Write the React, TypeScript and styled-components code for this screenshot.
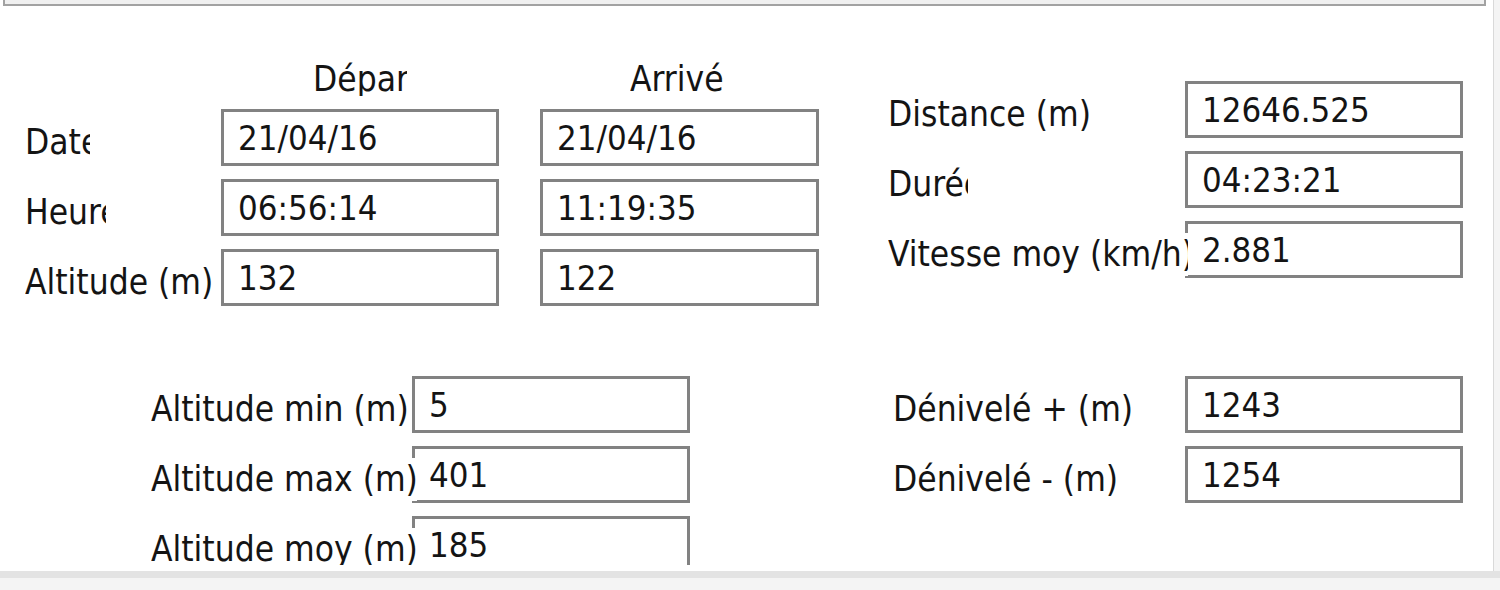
import React from 'react';
import styled, { createGlobalStyle } from 'styled-components';

const GlobalStyle = createGlobalStyle`
  html, body { margin: 0; padding: 0; background: #f4f4f4; }
  body { font-family: "DejaVu Sans Condensed", "DejaVu Sans", sans-serif; }
`;

const Window = styled.div`
  width: 1500px;
  height: 590px;
  overflow: hidden;
  background: #f4f4f4;
  display: flex;
  flex-direction: column;
`;

const Panel = styled.div`
  flex: none;
  width: 1494px;
  height: 571px;
  box-sizing: border-box;
  background: #ffffff;
  border-right: 1px solid #d9d9d9;
  display: flex;
  flex-direction: column;
`;

const BottomEdge = styled.div`
  flex: none;
  height: 7px;
  background: #e3e3e3;
`;

const TopStrip = styled.div`
  flex: none;
  margin-left: 3px;
  width: 1483px;
  height: 6px;
  box-sizing: border-box;
  background: #f0f0f0;
  border: 2px solid #a2a2a2;
  border-top: none;
`;

const Content = styled.div`
  flex: none;
  height: 559px;
  box-sizing: border-box;
  overflow: hidden;
  padding-top: 56px;
  font-size: 34.5px;
  color: #141414;
  display: flex;
  flex-direction: column;
  gap: 70px;
`;

const Section = styled.div<{ $pl: number }>`
  display: flex;
  align-items: flex-start;
  padding-left: ${p => p.$pl}px;
`;

const Block = styled.div<{ $mt?: number; $ml?: number }>`
  flex: none;
  display: flex;
  flex-direction: column;
  gap: 13px;
  margin-top: ${p => p.$mt ?? 0}px;
  margin-left: ${p => p.$ml ?? 0}px;
`;

const HeaderRow = styled.div`
  display: flex;
  height: 34px;
  align-items: flex-end;
`;

const Header = styled.div<{ $ml: number; $w: number }>`
  flex: none;
  margin-left: ${p => p.$ml}px;
  width: ${p => p.$w}px;
  height: 34px;
  line-height: 34px;
  font-size: 35px;
  white-space: nowrap;
  overflow: hidden;
`;

const Row = styled.div`
  display: flex;
  align-items: flex-start;
  height: 57px;
`;

const Label = styled.div<{ $track: number; $visible?: number }>`
  flex: none;
  position: relative;
  z-index: 1;
  width: ${p => p.$visible ?? p.$track}px;
  margin-right: ${p => p.$track - (p.$visible ?? p.$track)}px;
  margin-top: 12px;
  height: 43px;
  line-height: 43px;
  font-size: 35px;
  background: #ffffff;
  white-space: nowrap;
  overflow: hidden;
`;

const TextBox = styled.div<{ $w?: number; $ml?: number }>`
  flex: none;
  width: ${p => p.$w ?? 278}px;
  height: 57px;
  margin-left: ${p => p.$ml ?? 0}px;
  box-sizing: border-box;
  border: 3px solid #828282;
  background: #ffffff;
  padding: 9px 0 0 14px;
  line-height: 1;
  white-space: nowrap;
  overflow: hidden;
`;

export default function App() {
  return (
    <>
      <GlobalStyle />
      <Window>
        <Panel>
          <TopStrip />
          <Content>
            <Section $pl={25}>
              <Block>
                <HeaderRow>
                  <Header $ml={288} $w={94}>Départ</Header>
                  <Header $ml={223} $w={93}>Arrivée</Header>
                </HeaderRow>
                <Row>
                  <Label $track={196} $visible={65}>Date</Label>
                  <TextBox>21/04/16</TextBox>
                  <TextBox $ml={41} $w={279}>21/04/16</TextBox>
                </Row>
                <Row>
                  <Label $track={196} $visible={81}>Heure</Label>
                  <TextBox>06:56:14</TextBox>
                  <TextBox $ml={41} $w={279}>11:19:35</TextBox>
                </Row>
                <Row>
                  <Label $track={196}>Altitude (m)</Label>
                  <TextBox>132</TextBox>
                  <TextBox $ml={41} $w={279}>122</TextBox>
                </Row>
              </Block>
              <Block $mt={19} $ml={69}>
                <Row>
                  <Label $track={297}>Distance (m)</Label>
                  <TextBox>12646.525</TextBox>
                </Row>
                <Row>
                  <Label $track={297} $visible={80}>Durée</Label>
                  <TextBox>04:23:21</TextBox>
                </Row>
                <Row>
                  <Label $track={297} $visible={300}>Vitesse moy (km/h)</Label>
                  <TextBox>2.881</TextBox>
                </Row>
              </Block>
            </Section>
            <Section $pl={151}>
              <Block>
                <Row>
                  <Label $track={261}>Altitude min (m)</Label>
                  <TextBox>5</TextBox>
                </Row>
                <Row>
                  <Label $track={261} $visible={266}>Altitude max (m)</Label>
                  <TextBox>401</TextBox>
                </Row>
                <Row>
                  <Label $track={261} $visible={266}>Altitude moy (m)</Label>
                  <TextBox>185</TextBox>
                </Row>
              </Block>
              <Block $ml={203}>
                <Row>
                  <Label $track={292}>Dénivelé + (m)</Label>
                  <TextBox>1243</TextBox>
                </Row>
                <Row>
                  <Label $track={292}>Dénivelé - (m)</Label>
                  <TextBox>1254</TextBox>
                </Row>
              </Block>
            </Section>
          </Content>
        </Panel>
        <BottomEdge />
      </Window>
    </>
  );
}
